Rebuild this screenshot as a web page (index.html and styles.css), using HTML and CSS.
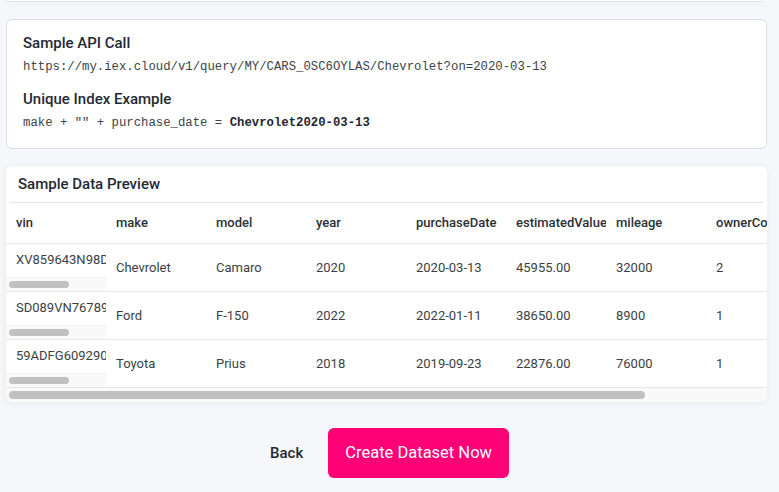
FILE: index.html
```html
<!DOCTYPE html>
<html>
<head>
<meta charset="utf-8">
<link rel="stylesheet" href="styles.css">
</head>
<body>
<div class="page">
  <div class="card card-top"></div>

  <section class="card info">
    <h3 class="info-title">Sample API Call</h3>
    <div class="mono">https://my.iex.cloud/v1/query/MY/CARS_0SC6OYLAS/Chevrolet?on=2020-03-13</div>
    <h3 class="info-title second">Unique Index Example</h3>
    <div class="mono">make + "" + purchase_date = <b>Chevrolet2020-03-13</b></div>
  </section>

  <section class="card preview">
    <h3 class="preview-title">Sample Data Preview</h3>
    <div class="table-scroll">
      <table class="data">
        <thead>
          <tr>
            <th>vin</th><th>make</th><th>model</th><th>year</th><th>purchaseDate</th><th>estimatedValue</th><th>mileage</th><th>ownerCount</th><th>color</th>
          </tr>
        </thead>
        <tbody>
          <tr>
            <td class="vin"><div class="vin-text">XV859643N98D12345</div><div class="hbar"><div class="hbar-thumb cell-thumb"></div></div></td>
            <td>Chevrolet</td><td>Camaro</td><td>2020</td><td>2020-03-13</td><td>45955.00</td><td>32000</td><td>2</td><td>Red</td>
          </tr>
          <tr>
            <td class="vin"><div class="vin-text">SD089VN76789AB123</div><div class="hbar"><div class="hbar-thumb cell-thumb"></div></div></td>
            <td>Ford</td><td>F-150</td><td>2022</td><td>2022-01-11</td><td>38650.00</td><td>8900</td><td>1</td><td>Blue</td>
          </tr>
          <tr>
            <td class="vin"><div class="vin-text">59ADFG60929012345</div><div class="hbar"><div class="hbar-thumb cell-thumb"></div></div></td>
            <td>Toyota</td><td>Prius</td><td>2018</td><td>2019-09-23</td><td>22876.00</td><td>76000</td><td>1</td><td>White</td>
          </tr>
        </tbody>
      </table>
    </div>
    <div class="hbar main-bar"><div class="hbar-thumb main-thumb"></div></div>
  </section>

  <div class="actions">
    <button class="btn-back">Back</button>
    <button class="btn-create">Create Dataset Now</button>
  </div>
</div>
</body>
</html>
```

FILE: styles.css
```css
* { box-sizing: border-box; }

html, body {
  margin: 0;
  padding: 0;
  background: #f6f7fa;
}

body {
  font-family: "Roboto", "Liberation Sans", sans-serif;
  color: #1f2933;
}

.page {
  display: flex;
  flex-direction: column;
  gap: 17px;
  padding: 0 12px 0 6px;
}

.card {
  background: #ffffff;
  border-radius: 6px;
}

.card-top {
  height: 2px;
  margin-right: 3px;
  border-bottom: 1px solid #e2e3e8;
  border-radius: 0 0 6px 6px;
  box-shadow: 0 2px 6px rgba(30, 40, 70, 0.06);
}

.info {
  border: 1px solid #dcdde2;
  padding: 13px 16px 16px;
}

.info-title {
  margin: 0;
  font-size: 15px;
  line-height: 20px;
  font-weight: 500;
  color: #1f2933;
}

.info-title.second {
  margin-top: 13px;
}

.mono {
  margin-top: 5px;
  font-family: "Liberation Mono", "DejaVu Sans Mono", monospace;
  font-size: 12.3px;
  line-height: 18px;
  color: #3d4348;
}

.mono b {
  font-weight: 700;
  color: #1f2933;
}

.preview {
  overflow: hidden;
  box-shadow: 0 1px 6px rgba(30, 40, 70, 0.07);
}

.preview-title {
  margin: 0 4px;
  padding: 9px 8px 9px;
  font-size: 15px;
  line-height: 18px;
  font-weight: 500;
  color: #1f2933;
  border-bottom: 1px solid #e3e4e8;
}

.table-scroll {
  overflow: hidden;
}

.data {
  border-collapse: collapse;
  table-layout: fixed;
  width: 900px;
  font-size: 13px;
}

.data th,
.data td {
  width: 100px;
  padding: 0 10px;
  text-align: left;
  white-space: nowrap;
  overflow: hidden;
  border-bottom: 1px solid #e6e6e9;
}

.data th {
  height: 40px;
  font-weight: 500;
  color: #2b3035;
  vertical-align: middle;
}

.data td {
  height: 48px;
  color: #3a3f44;
  vertical-align: middle;
}

.data td.vin {
  padding: 0;
  vertical-align: top;
}

.vin-text {
  padding: 7px 10px 9px;
  line-height: 17px;
  white-space: nowrap;
  overflow: hidden;
}

.hbar {
  height: 14px;
  padding: 3px;
  background: #f9f9f9;
  border-top: 1px solid #f0f0f0;
}

.hbar-thumb {
  height: 7px;
  border-radius: 4px;
  background: #c1c1c1;
}

.cell-thumb {
  width: 60px;
}

.main-bar {
  padding-top: 3px;
  border-top: 0;
}

.main-thumb {
  height: 8px;
  width: 636px;
}

.actions {
  display: flex;
  justify-content: center;
  align-items: center;
  gap: 25px;
  margin-top: 9px;
  padding-left: 6px;
}

.btn-back {
  border: 0;
  background: transparent;
  font-family: inherit;
  font-size: 15px;
  font-weight: 500;
  color: #1f2933;
  padding: 0;
}

.btn-create {
  border: 0;
  background: #ff0077;
  color: #ffffff;
  font-family: inherit;
  font-size: 16.5px;
  font-weight: 400;
  height: 50px;
  padding: 0 17px;
  border-radius: 6px;
}
```
